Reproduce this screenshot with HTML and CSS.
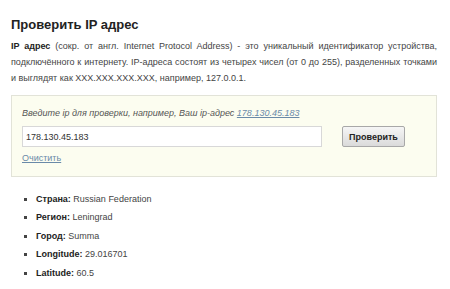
FILE: index.html
```html
<!DOCTYPE html>
<html lang="ru">
<head>
    <meta charset="UTF-8">
    <title>Проверить IP адрес</title>
    <link rel="stylesheet" href="styles.css">
</head>
<body>
<div class="page">
    <h1>Проверить IP адрес</h1>

    <p class="intro"><b>IP адрес</b> (сокр. от англ. Internet Protocol Address) - это уникальный идентификатор устройства, подключённого к интернету. IP-адреса состоят из четырех чисел (от 0 до 255), разделенных точками и выглядят как XXX.XXX.XXX.XXX, например, 127.0.0.1.</p>

    <form class="check-box" onsubmit="return false">
        <div class="hint">Введите ip для проверки, например, Ваш ip-адрес <a href="#">178.130.45.183</a></div>
        <div class="check-row">
            <input type="text" class="ip-input" value="178.130.45.183">
            <button type="submit" class="check-btn">Проверить</button>
        </div>
        <a href="#" class="clear-link">Очистить</a>
    </form>

    <ul class="result">
        <li><b>Страна:</b> Russian Federation</li>
        <li><b>Регион:</b> Leningrad</li>
        <li><b>Город:</b> Summa</li>
        <li><b>Longitude:</b> 29.016701</li>
        <li><b>Latitude:</b> 60.5</li>
    </ul>
</div>
</body>
</html>
```

FILE: styles.css
```css
body {
    margin: 0;
    background-color: #fff;
    font-family: "Liberation Sans", Arial, sans-serif;
    color: #333;
}
.page {
    padding: 16px 13px 0 11px;
}
h1 {
    margin: 0 0 5px 0;
    font-size: 13px;
    line-height: 17px;
    font-weight: bold;
    color: #222;
}
.intro {
    margin: 0 0 9px 0;
    font-size: 9px;
    line-height: 16px;
    text-align: justify;
    color: #444;
}
.intro b {
    color: #222;
}
.check-box {
    background-color: #fcfdf0;
    border: 1px solid #e2e3d8;
    padding: 11px 10px 11px 10px;
}
.hint {
    font-size: 9px;
    line-height: 12px;
    font-style: italic;
    color: #555;
}
.hint a {
    color: #6a8aa8;
}
.check-row {
    display: flex;
    align-items: center;
    gap: 20px;
    margin: 7px 0 0 0;
}
.ip-input {
    width: 300px;
    height: 21px;
    box-sizing: border-box;
    border: 1px solid #d8d8d8;
    background: #fff;
    padding: 0 3px;
    font-family: "Liberation Sans", Arial, sans-serif;
    font-size: 9px;
    color: #333;
}
.check-btn {
    height: 21px;
    padding: 0 6px;
    border: 1px solid #a8a8a8;
    border-radius: 2px;
    background: linear-gradient(#f6f6f6, #dadada);
    font-family: "Liberation Sans", Arial, sans-serif;
    font-size: 9px;
    font-weight: bold;
    color: #222;
}
.clear-link {
    display: inline-block;
    margin-top: 4px;
    font-size: 9px;
    line-height: 12px;
    color: #6a8aa8;
}
.result {
    margin: 13px 0 0 0;
    padding-left: 25px;
    font-size: 9px;
    color: #444;
    list-style: square;
}
.result li {
    line-height: 18.4px;
}
.result b {
    color: #222;
}
```
